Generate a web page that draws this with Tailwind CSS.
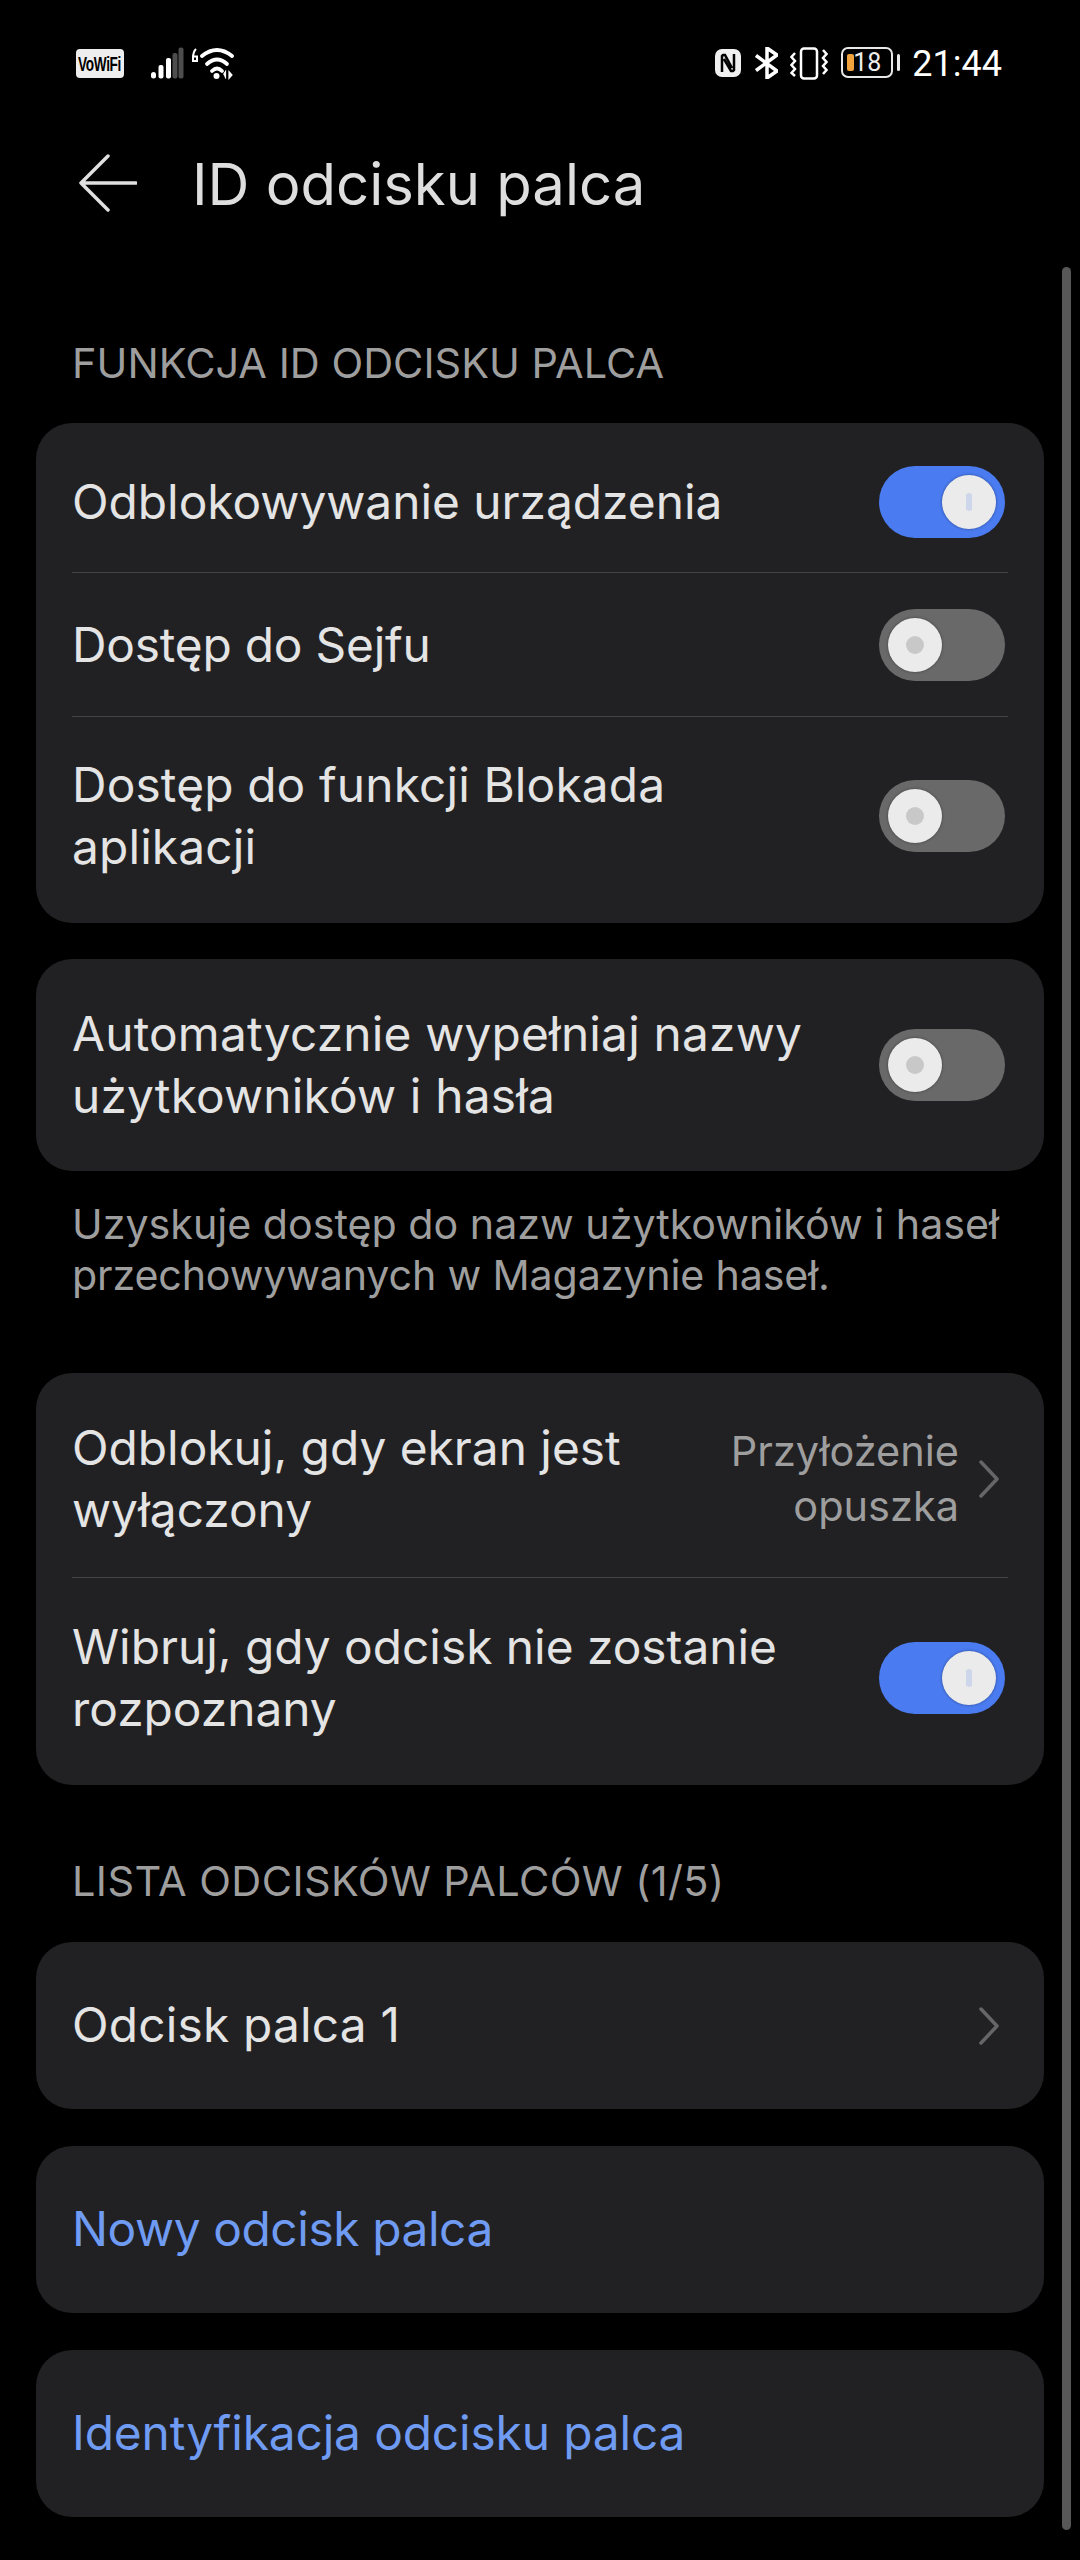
<!DOCTYPE html>
<html><head><meta charset="utf-8"><script src="https://cdn.jsdelivr.net/npm/@tailwindcss/browser@4"></script></head>
<body class="bg-black">
<div class="relative w-[1080px] h-[2560px] bg-black overflow-hidden font-['Inter','Noto_Sans',sans-serif] text-[#e4e4e4]">
  <!-- status bar -->
  <div class="h-[140px] pl-[76px] pr-[78px] pt-[47px] flex items-start justify-between">
    <div class="flex items-start h-[34px]">
      <div class="mt-[2px] w-[48px] h-[29px] bg-[#eee] rounded-[4px] flex items-center justify-center overflow-hidden text-black text-[20px] leading-none font-bold font-['Liberation_Sans',sans-serif]"><span class="scale-x-[0.68] tracking-[-0.5px]">VoWiFi</span></div>
      <svg class="ml-[27px]" width="84" height="34" viewBox="0 0 84 34"><g fill="#fff"><rect x="0" y="25" width="5" height="6.500" rx="2.500"/><rect x="7.500" y="18" width="5" height="13.500" rx="2"/><rect x="15" y="11" width="5" height="20.500" rx="2"/></g><g fill="#4d4d4d"><rect x="21.500" y="6" width="5" height="25.500" rx="2"/><rect x="27.500" y="0.500" width="5" height="31" rx="2"/></g><g fill="none" stroke="#fff" stroke-width="3.800" stroke-linecap="round"><path d="M51 9Q66 -3 81 9"/><path d="M56 17Q66 8 76 17"/><path d="M61 24Q66 19 71 24"/></g><circle cx="65.500" cy="29" r="3" fill="#fff"/><path d="M45 2c-2 2-3 5-3 9v3M42 9.500h4v4.500h-4z" fill="none" stroke="#fff" stroke-width="2"/><path d="M74.500 31.500v-7l-2 3M78 24.500v7l3-3.500z" fill="#fff" stroke="#fff" stroke-width="1.200"/></svg>
    </div>
    <div class="flex items-start">
      <svg class="mt-[2px]" width="26" height="28" viewBox="0 0 26 28"><rect width="26" height="28" rx="7" fill="#f0f0f0"/><path d="M7 23V7l1-1h2l7 13M19 5v16l-1 1h-2L9 10" fill="none" stroke="#000" stroke-width="2.500"/></svg>
      <svg class="ml-[14px]" width="23" height="32" viewBox="0 0 23 32" fill="none"><path d="M1 8.500l21 15.500-10 7V1l10 7L1 23.500" stroke="#fff" stroke-width="3.500"/></svg>
      <svg class="ml-[12px]" width="38" height="33" viewBox="0 0 38 33" fill="none" stroke="#fff" stroke-width="2.500"><rect x="11" y="1.500" width="16" height="30" rx="3"/><path d="M5 6L1.500 10 5 14 1.500 18 5 22 1.500 26 5 29M33 3L36.500 7 33 11 36.500 15 33 19 36.500 23 33 27"/></svg>
      <div class="relative ml-[13px] w-[52px] h-[31px] border-[2.500px] border-[#e8e8e8] rounded-[7px] flex items-center justify-end pr-[10px] text-[#eee] text-[25px] leading-none font-['Roboto',sans-serif]"><span class="absolute left-[4px] top-[4.500px] w-[7px] h-[17px] rounded-[2px] bg-[#f0a23c]"></span>18</div>
      <div class="mt-[7px] ml-[4px] w-[3px] h-[17px] bg-[#e8e8e8] rounded-sm"></div>
      <div class="ml-[12px] mt-[-1px] text-[36px] leading-[36px] text-white font-['Roboto',sans-serif]">21:44</div>
    </div>
  </div>
  <!-- header -->
  <div class="h-[90px] flex items-center pl-[79px]">
    <svg class="-mt-[4px]" width="58" height="58" viewBox="0 0 58 58"><path d="M29 2L2 29l27 27M2 29h55" fill="none" stroke="#e0e0e0" stroke-width="3.500" stroke-linecap="round" stroke-linejoin="round"/></svg>
    <div class="ml-[55px] -mt-[2px] text-[58px] leading-none text-[#dedede]">ID odcisku palca</div>
  </div>
  <!-- scrollbar -->
  <div class="absolute left-[1062px] top-[267px] w-[9px] h-[2263px] bg-[#575757] rounded-full"></div>
  <!-- content -->
  <div class="px-[36px] flex flex-col">
    <div class="mt-[102px] h-[62px] pl-[36px] flex items-center text-[41.500px] text-[#9e9e9e]">FUNKCJA ID ODCISKU PALCA</div>
    <div class="mt-[29px] py-[8px] rounded-[36px] bg-[#212123] text-[47.800px] leading-[62px]">
      <div class="mx-[36px] h-[142px] flex items-center justify-between border-b border-[#434343]">
        <span>Odblokowywanie urządzenia</span>
        <div class="relative w-[126px] h-[72px] rounded-full bg-[#4a7bf0] mr-[3px]"><div class="absolute left-[63px] top-[9px] w-[54px] h-[54px] rounded-full bg-[#ebebeb] shadow-[0_0_3px_rgba(0,0,0,0.4)] flex items-center justify-center"><div class="w-[6px] h-[18px] rounded-full bg-[#cdd6ea]"></div></div></div>
      </div>
      <div class="mx-[36px] h-[144px] flex items-center justify-between border-b border-[#434343]">
        <span class="tracking-[-0.2px]">Dostęp do Sejfu</span>
        <div class="relative w-[126px] h-[72px] rounded-full bg-[#696969] mr-[3px]"><div class="absolute left-[9px] top-[9px] w-[54px] h-[54px] rounded-full bg-[#ebebeb] shadow-[0_0_3px_rgba(0,0,0,0.4)] flex items-center justify-center"><div class="w-[18px] h-[18px] rounded-full bg-[#c8c8c8]"></div></div></div>
      </div>
      <div class="mx-[36px] h-[198px] flex items-center justify-between">
        <span class="w-[700px] tracking-[0.15px]">Dostęp do funkcji Blokada aplikacji</span>
        <div class="relative w-[126px] h-[72px] rounded-full bg-[#696969] mr-[3px]"><div class="absolute left-[9px] top-[9px] w-[54px] h-[54px] rounded-full bg-[#ebebeb] shadow-[0_0_3px_rgba(0,0,0,0.4)] flex items-center justify-center"><div class="w-[18px] h-[18px] rounded-full bg-[#c8c8c8]"></div></div></div>
      </div>
    </div>
    <div class="mt-[36px] rounded-[36px] bg-[#212123] text-[47.800px] leading-[62px]">
      <div class="mx-[36px] h-[212px] flex items-center justify-between">
        <span class="w-[780px] tracking-[0.2px]">Automatycznie wypełniaj nazwy użytkowników i hasła</span>
        <div class="relative w-[126px] h-[72px] rounded-full bg-[#696969] mr-[3px]"><div class="absolute left-[9px] top-[9px] w-[54px] h-[54px] rounded-full bg-[#ebebeb] shadow-[0_0_3px_rgba(0,0,0,0.4)] flex items-center justify-center"><div class="w-[18px] h-[18px] rounded-full bg-[#c8c8c8]"></div></div></div>
      </div>
    </div>
    <div class="mt-[28px] pl-[36px] pr-[20px] text-[41.200px] leading-[51px] text-[#9e9e9e]">Uzyskuje dostęp do nazw użytkowników i haseł<br><span class="tracking-[-0.15px]">przechowywanych w Magazynie haseł.</span></div>
    <div class="mt-[72px] py-[8px] rounded-[36px] bg-[#212123] text-[47.800px] leading-[62px]">
      <div class="mx-[36px] h-[197px] flex items-center justify-between border-b border-[#434343]">
        <span class="w-[600px]">Odblokuj, gdy ekran jest wyłączony</span>
        <div class="flex items-center">
          <span class="text-right text-[41.500px] leading-[55px] text-[#9e9e9e]">Przyłożenie<br>opuszka</span>
          <svg class="ml-[20px] mr-[9px]" width="20" height="38" viewBox="0 0 20 38"><path d="M2 2l16 17L2 36" fill="none" stroke="#666" stroke-width="3.500" stroke-linecap="round" stroke-linejoin="round"/></svg>
        </div>
      </div>
      <div class="mx-[36px] h-[199px] flex items-center justify-between">
        <span class="w-[780px]">Wibruj, gdy odcisk nie zostanie rozpoznany</span>
        <div class="relative w-[126px] h-[72px] rounded-full bg-[#4a7bf0] mr-[3px]"><div class="absolute left-[63px] top-[9px] w-[54px] h-[54px] rounded-full bg-[#ebebeb] shadow-[0_0_3px_rgba(0,0,0,0.4)] flex items-center justify-center"><div class="w-[6px] h-[18px] rounded-full bg-[#cdd6ea]"></div></div></div>
      </div>
    </div>
    <div class="mt-[65px] h-[62px] pl-[36px] flex items-center text-[41.500px] text-[#9e9e9e] tracking-[0.4px]">LISTA ODCISKÓW PALCÓW (1/5)</div>
    <div class="mt-[30px] h-[167px] rounded-[36px] bg-[#212123] px-[36px] flex items-center justify-between text-[47.800px]">
      <span class="tracking-[0.2px]">Odcisk palca 1</span>
      <svg class="mr-[9px]" width="20" height="38" viewBox="0 0 20 38"><path d="M2 2l16 17L2 36" fill="none" stroke="#666" stroke-width="3.500" stroke-linecap="round" stroke-linejoin="round"/></svg>
    </div>
    <div class="mt-[37px] h-[167px] rounded-[36px] bg-[#212123] px-[36px] flex items-center text-[47.800px] text-[#6f9bf2] tracking-[-0.4px]">Nowy odcisk palca</div>
    <div class="mt-[37px] h-[167px] rounded-[36px] bg-[#212123] px-[36px] flex items-center text-[47.800px] text-[#6f9bf2] tracking-[-0.12px]">Identyfikacja odcisku palca</div>
  </div>
</div>
</body></html>
